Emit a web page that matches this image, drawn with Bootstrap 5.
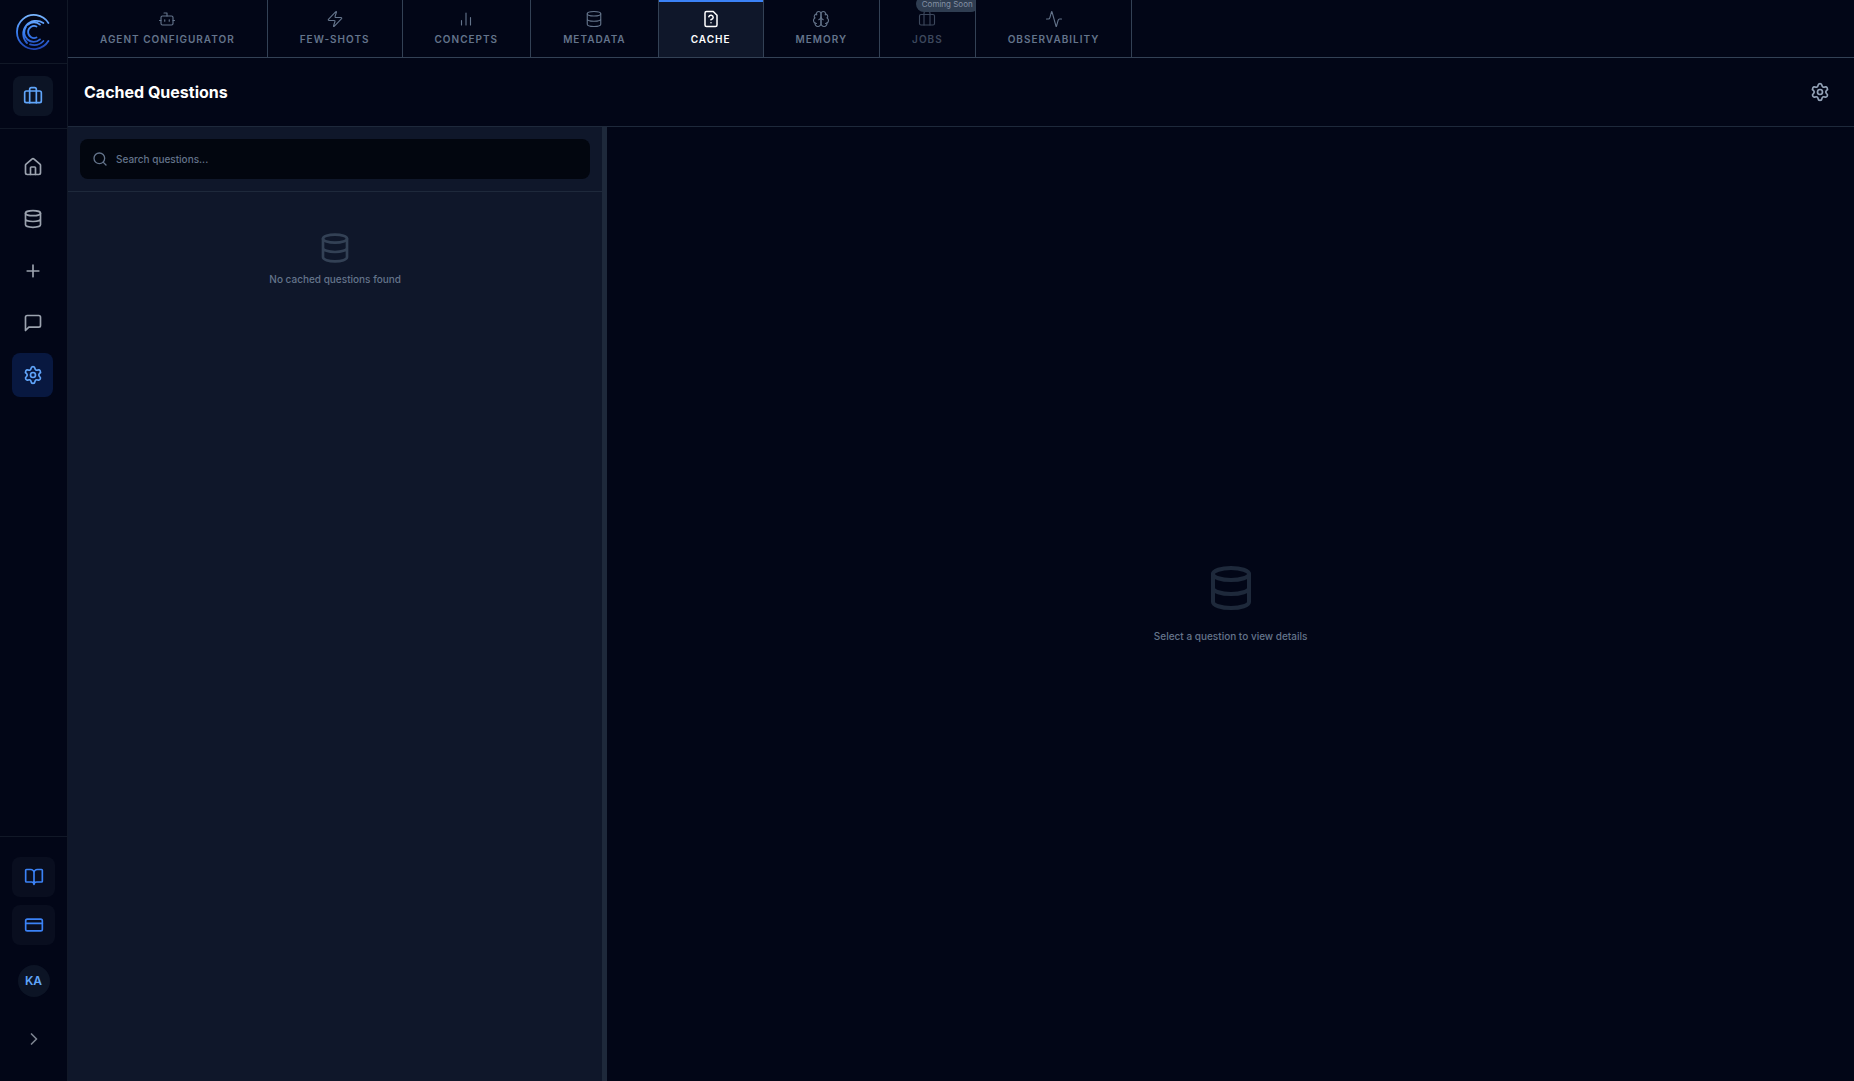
<!DOCTYPE html>
<html lang="en" data-bs-theme="dark">
<head>
<meta charset="utf-8">
<meta name="viewport" content="width=device-width, initial-scale=1">
<title>Cached Questions</title>
<link href="https://cdn.jsdelivr.net/npm/bootstrap@5.3.0/dist/css/bootstrap.min.css" rel="stylesheet">
<style>
:root{--ink:#020617;--panel:#0f172a;--edge:#1e293b;--line:#334155;--dim:#64748b}
body{font-family:Inter,"Liberation Sans",sans-serif;font-size:10px;font-weight:500;line-height:16px;background:var(--ink);color:var(--dim)}
svg{display:block;fill:none;stroke:currentColor;stroke-width:2;stroke-linecap:round;stroke-linejoin:round}
.i18{width:18px;height:18px;stroke-width:1.5}
.i16{width:16px;height:16px}
.i20{width:20px;height:20px}
.i32{width:32px;height:32px}
.i48{width:48px;height:48px}
.rail{width:68px;border-right:1px solid #111827}
.rail-sec{border-bottom:1px solid #111827}
.rail-foot{border-top:1px solid #111827;padding:20px 12px 32px}
.brand-cell{height:64px}
.space-cell{height:65px;padding-right:1px}
.plain-btn{background:none;border:0;padding:0;color:inherit;display:flex;align-items:center;justify-content:center}
.tile{width:40px;height:40px;border-radius:8px;background:#0c1425;color:#60a5fa}
.rail-nav{padding:16px 14px 16px 12px}
.rail-nav a{height:44px;border-radius:8px;color:#9ca3af}
.rail-nav a.active{background:#081840;color:#60a5fa}
.foot-tile{height:40px;border-radius:8px;background:#090e1f;color:#3b82f6}
.avatar{width:32px;height:32px;border-radius:50%;background:#0c1425;color:#60a5fa;font-size:12px;font-weight:600;margin:20px 0 32px}
.expand-btn{color:#9ca3af;opacity:.8}
.tabs-bar{height:58px;border-bottom:1px solid var(--line)}
.tab-item{padding:0 32px;border-right:1px solid var(--line);color:var(--dim);font-weight:600;letter-spacing:1px;text-decoration:none;position:relative;overflow:hidden;gap:3px}
.tab-item.active{background:var(--panel);color:#fff;box-shadow:inset 0 2px #3b82f6}
.tab-item.active svg{stroke-width:2}
.tab-item.disabled-tab>svg,.tab-item.disabled-tab>span:first-of-type{opacity:.6}
.soon{position:absolute;top:-4px;right:-4px;background:#2f3d51;color:#8491a5;font-size:8px;font-weight:400;letter-spacing:0;line-height:16px;padding:0 6px;border-radius:8px}
.page-head{height:69px;padding:0 24px 0 16px;border-bottom:1px solid var(--edge)}
.page-head h1{font-size:16px;line-height:24px;font-weight:700;color:#fff;margin:0}
.page-head button{color:#94a3b8}
.list-pane{width:calc((100% - 5px)*.3);background:var(--panel)}
.search-row{padding:12px;border-bottom:1px solid var(--edge)}
.search-box{height:40px;border-radius:8px;background:#02060f;padding:0 12px;gap:8px}
.search-box input{background:none;border:0;outline:0;padding:0;color:#fff;font-weight:500}
.search-box input::placeholder{color:var(--dim);opacity:1}
.splitter{width:5px;background:var(--edge)}
.empty-list{padding-top:40px;gap:7px}
.empty-list svg{color:#334155}
.empty-detail{gap:16px}
.empty-detail svg{color:#1e293b}
</style>
</head>
<body class="vh-100 d-flex overflow-hidden">
<svg class="d-none">
<symbol id="db" viewBox="0 0 24 24"><ellipse cx="12" cy="5" rx="9" ry="3"/><path d="M3 5v14a9 3 0 0 0 18 0V5M3 12a9 3 0 0 0 18 0"/></symbol>
<symbol id="case" viewBox="0 0 24 24"><rect x="2" y="6" width="20" height="14" rx="2"/><path d="M16 20V4a2 2 0 0 0-2-2h-4a2 2 0 0 0-2 2v16"/></symbol>
<symbol id="gear" viewBox="0 0 24 24"><path d="M9.671 4.136a2.34 2.34 0 0 1 4.659 0 2.34 2.34 0 0 0 3.319 1.915 2.34 2.34 0 0 1 2.33 4.033 2.34 2.34 0 0 0 0 3.831 2.34 2.34 0 0 1-2.33 4.033 2.34 2.34 0 0 0-3.319 1.915 2.34 2.34 0 0 1-4.659 0 2.34 2.34 0 0 0-3.32-1.915 2.34 2.34 0 0 1-2.33-4.033 2.34 2.34 0 0 0 0-3.831A2.34 2.34 0 0 1 6.35 6.051a2.34 2.34 0 0 0 3.319-1.915"/><circle cx="12" cy="12" r="3"/></symbol>
</svg>
<aside class="rail d-flex flex-column flex-shrink-0">
  <div class="rail-sec brand-cell d-flex align-items-center justify-content-center">
    <svg width="36" height="36" viewBox="0 0 36 36" role="img" aria-label="Logo">
      <defs><linearGradient id="lg" gradientUnits="userSpaceOnUse" x1="0" y1="0" x2="0" y2="36"><stop offset="0" stop-color="#7cb8ff"/><stop offset=".5" stop-color="#3b82f6"/><stop offset="1" stop-color="#1e40af"/></linearGradient></defs>
      <g stroke="url(#lg)" stroke-width="1.8"><path d="M32.400 9A17 17 0 1 0 32.400 27"/><path d="M27.400 9A13 13 0 0 0 11 29"/><path d="M14 30.400A13 13 0 0 0 27.400 27"/><path d="M12 10.600A9.500 9.500 0 0 1 24 10.600"/><path d="M9.800 13A9.500 9.500 0 0 0 24 25.400"/><path d="M20.500 12.500A6 6 0 1 0 20.500 23.500"/></g>
    </svg>
  </div>
  <div class="rail-sec space-cell d-flex align-items-center justify-content-center">
    <button class="plain-btn tile" aria-label="Workspace"><svg class="i20"><use href="#case"/></svg></button>
  </div>
  <nav class="rail-nav d-flex flex-column gap-2" aria-label="Main">
    <a href="#" class="d-flex align-items-center justify-content-center" aria-label="Home"><svg class="i20" viewBox="0 0 24 24"><path d="M15 21v-8a1 1 0 0 0-1-1h-4a1 1 0 0 0-1 1v8"/><path d="M3 10a2 2 0 0 1 .709-1.528l7-5.999a2 2 0 0 1 2.582 0l7 5.999A2 2 0 0 1 21 10v9a2 2 0 0 1-2 2H5a2 2 0 0 1-2-2z"/></svg></a>
    <a href="#" class="d-flex align-items-center justify-content-center" aria-label="Data"><svg class="i20"><use href="#db"/></svg></a>
    <a href="#" class="d-flex align-items-center justify-content-center" aria-label="New"><svg class="i20" viewBox="0 0 24 24"><path d="M5 12h14M12 5v14"/></svg></a>
    <a href="#" class="d-flex align-items-center justify-content-center" aria-label="Chats"><svg class="i20" viewBox="0 0 24 24"><path d="M21 15a2 2 0 0 1-2 2H7l-4 4V5a2 2 0 0 1 2-2h14a2 2 0 0 1 2 2z"/></svg></a>
    <a href="#" class="active d-flex align-items-center justify-content-center" aria-label="Settings"><svg class="i20"><use href="#gear"/></svg></a>
  </nav>
  <div class="rail-foot mt-auto d-flex flex-column align-items-center">
    <a href="#" class="foot-tile w-100 mb-2 d-flex align-items-center justify-content-center" aria-label="Docs"><svg class="i20" viewBox="0 0 24 24"><path d="M12 7v14M3 18a1 1 0 0 1-1-1V4a1 1 0 0 1 1-1h5a4 4 0 0 1 4 4 4 4 0 0 1 4-4h5a1 1 0 0 1 1 1v13a1 1 0 0 1-1 1h-6a3 3 0 0 0-3 3 3 3 0 0 0-3-3z"/></svg></a>
    <a href="#" class="foot-tile w-100 d-flex align-items-center justify-content-center" aria-label="Billing"><svg class="i20" viewBox="0 0 24 24"><rect x="2" y="5" width="20" height="14" rx="2"/><path d="M2 10h20"/></svg></a>
    <button class="plain-btn avatar">KA</button>
    <button class="plain-btn expand-btn" aria-label="Expand"><svg class="i20" viewBox="0 0 24 24"><path d="m9 18 6-6-6-6"/></svg></button>
  </div>
</aside>
<div class="d-flex flex-column flex-grow-1">
  <nav class="tabs-bar d-flex" aria-label="Sections">
    <a href="#" class="tab-item d-flex flex-column align-items-center justify-content-center"><svg class="i18" viewBox="0 0 24 24"><path d="M12 8V4H8"/><rect x="4" y="8" width="16" height="12" rx="2"/><path d="M2 14h2M20 14h2M15 13v2M9 13v2"/></svg><span>AGENT CONFIGURATOR</span></a>
    <a href="#" class="tab-item d-flex flex-column align-items-center justify-content-center"><svg class="i18" viewBox="0 0 24 24"><path d="M4 14a1 1 0 0 1-.78-1.63l9.9-10.2a.5.5 0 0 1 .86.46l-1.920 6.020A1 1 0 0 0 13 10h7a1 1 0 0 1 .78 1.630l-9.900 10.200a.5.5 0 0 1-.86-.46l1.920-6.020A1 1 0 0 0 11 14z"/></svg><span>FEW-SHOTS</span></a>
    <a href="#" class="tab-item d-flex flex-column align-items-center justify-content-center"><svg class="i18" viewBox="0 0 24 24"><path d="M12 20V4M18 20V10M6 20v-6"/></svg><span>CONCEPTS</span></a>
    <a href="#" class="tab-item d-flex flex-column align-items-center justify-content-center"><svg class="i18"><use href="#db"/></svg><span>METADATA</span></a>
    <a href="#" class="tab-item active d-flex flex-column align-items-center justify-content-center" aria-current="page"><svg class="i18" viewBox="0 0 24 24"><path d="M15 2H6a2 2 0 0 0-2 2v16a2 2 0 0 0 2 2h12a2 2 0 0 0 2-2V7z"/><path d="M12 17h.01M9.100 9a3 3 0 0 1 5.820 1c0 2-3 3-3 3"/></svg><span>CACHE</span></a>
    <a href="#" class="tab-item d-flex flex-column align-items-center justify-content-center"><svg class="i18" viewBox="0 0 24 24"><path d="M12 5a3 3 0 1 0-5.997.125 4 4 0 0 0-2.526 5.770 4 4 0 0 0 .556 6.588A4 4 0 1 0 12 18Z"/><path d="M12 5a3 3 0 1 1 5.997.125 4 4 0 0 1 2.526 5.770 4 4 0 0 1-.556 6.588A4 4 0 1 1 12 18Z"/><path d="M15 13a4.500 4.500 0 0 1-3-4 4.500 4.500 0 0 1-3 4"/><path d="M17.599 6.500a3 3 0 0 0 .399-1.375M6.003 5.125A3 3 0 0 0 6.401 6.500M3.477 10.896a4 4 0 0 1 .585-.396M19.938 10.500a4 4 0 0 1 .585.396M6 18a4 4 0 0 1-1.967-.516M19.967 17.484A4 4 0 0 1 18 18"/></svg><span>MEMORY</span></a>
    <a href="#" class="tab-item disabled-tab d-flex flex-column align-items-center justify-content-center" aria-disabled="true"><svg class="i18"><use href="#case"/></svg><span>JOBS</span><span class="soon">Coming Soon</span></a>
    <a href="#" class="tab-item d-flex flex-column align-items-center justify-content-center"><svg class="i18" viewBox="0 0 24 24"><path d="M22 12h-2.480a2 2 0 0 0-1.930 1.460l-2.350 8.360a.25.25 0 0 1-.48 0L9.240 2.180a.25.25 0 0 0-.48 0l-2.350 8.360A2 2 0 0 1 4.490 12H2"/></svg><span>OBSERVABILITY</span></a>
  </nav>
  <header class="page-head d-flex align-items-center justify-content-between">
    <h1>Cached Questions</h1>
    <button class="plain-btn" aria-label="Cache settings"><svg class="i20"><use href="#gear"/></svg></button>
  </header>
  <main class="d-flex flex-grow-1">
    <section class="list-pane d-flex flex-column">
      <div class="search-row">
        <label class="search-box d-flex align-items-center"><svg class="i16" viewBox="0 0 24 24"><circle cx="11" cy="11" r="8"/><path d="m21 21-4.300-4.300"/></svg><input class="flex-grow-1" type="text" placeholder="Search questions..." aria-label="Search questions"></label>
      </div>
      <div class="empty-list d-flex flex-column align-items-center"><svg class="i32"><use href="#db"/></svg><span>No cached questions found</span></div>
    </section>
    <div class="splitter" role="separator"></div>
    <section class="empty-detail flex-grow-1 d-flex flex-column align-items-center justify-content-center"><svg class="i48"><use href="#db"/></svg><span>Select a question to view details</span></section>
  </main>
</div>
<script src="https://cdn.jsdelivr.net/npm/bootstrap@5.3.0/dist/js/bootstrap.bundle.min.js"></script>
</body>
</html>
